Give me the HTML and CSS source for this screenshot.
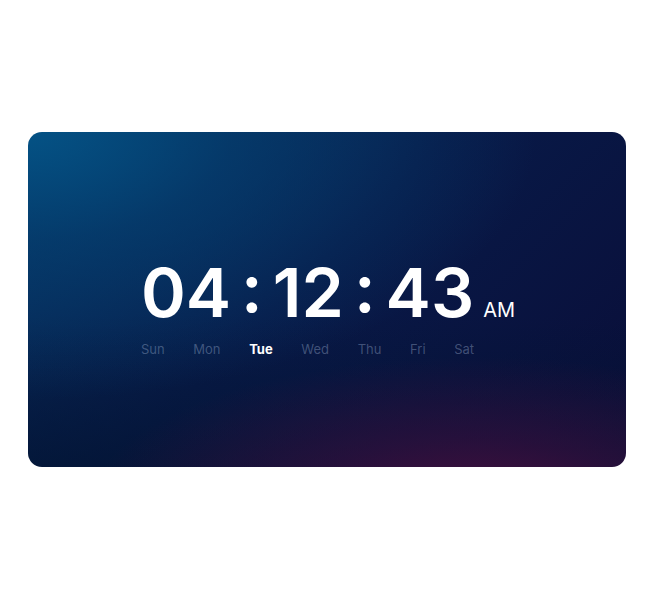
FILE: index.html
```html
<!DOCTYPE html>
<html lang="en">
<head>
<meta charset="utf-8">
<title>Clock</title>
<link rel="stylesheet" href="styles.css">
</head>
<body>
  <div class="card">
    <div class="clock">
      <div class="main">
        <div class="time"><span class="num">04</span><span class="colon">:</span><span class="num">12</span><span class="colon">:</span><span class="num">43</span></div>
        <div class="days">
          <span class="day">Sun</span>
          <span class="day">Mon</span>
          <span class="day active">Tue</span>
          <span class="day">Wed</span>
          <span class="day">Thu</span>
          <span class="day">Fri</span>
          <span class="day">Sat</span>
        </div>
      </div>
      <div class="ampm">AM</div>
    </div>
  </div>
</body>
</html>
```
FILE: styles.css
```css
html, body {
  margin: 0;
  padding: 0;
  background: #ffffff;
}
body {
  padding: 132px 0 0 28px;
  font-family: Inter, "Noto Sans", sans-serif;
}
.card {
  width: 598px;
  height: 335px;
  border-radius: 14px;
  overflow: hidden;
  display: flex;
  align-items: center;
  justify-content: center;
  background:
    radial-gradient(ellipse 85% 80% at 0% 0%, rgba(4, 84, 135, 0.95) 0%, rgba(4, 70, 120, 0.6) 40%, rgba(4, 60, 110, 0) 100%),
    radial-gradient(ellipse 65% 45% at 75% 112%, rgba(75, 14, 62, 0.95) 0%, rgba(60, 14, 62, 0.6) 45%, rgba(40, 14, 62, 0) 100%),
    linear-gradient(180deg, rgba(3, 22, 56, 0) 55%, rgba(2, 20, 50, 0.7) 100%),
    linear-gradient(135deg, #06305e 0%, #081a48 45%, #0a0d38 100%);
}
.clock {
  display: flex;
  align-items: baseline;
  gap: 9px;
  margin-top: 16px;
  margin-left: 2px;
}
.main {
  display: flex;
  flex-direction: column;
}
.time {
  display: flex;
  align-items: baseline;
  color: #ffffff;
  font-size: 68px;
  font-weight: 600;
  line-height: 1;
  letter-spacing: 0;
}
.colon {
  margin: 0 10px;
  position: relative;
  top: -5px;
}
.days {
  display: flex;
  justify-content: space-between;
  margin-top: 15px;
  font-size: 13px;
  line-height: 16px;
}
.day {
  color: rgba(160, 180, 210, 0.38);
}
.day.active {
  color: #ffffff;
  font-weight: 700;
}
.ampm {
  color: #ffffff;
  font-size: 20px;
  font-weight: 400;
}
```
